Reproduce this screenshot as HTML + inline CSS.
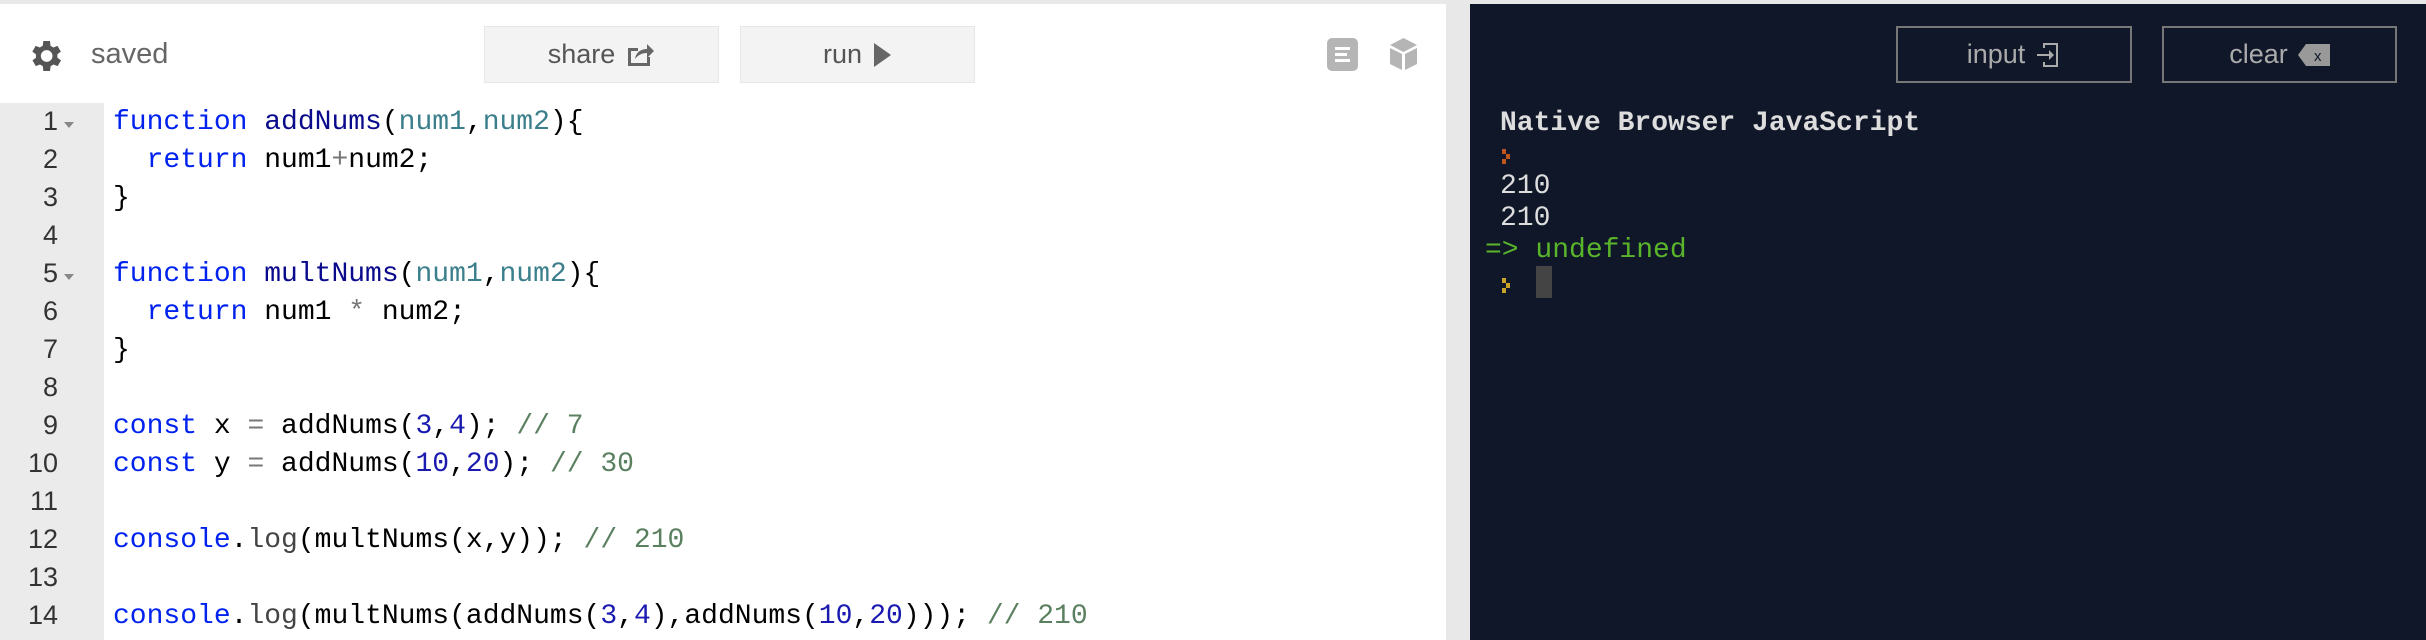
<!DOCTYPE html>
<html style="width:2426px;height:640px;overflow:hidden"><head><meta charset="utf-8"><style>
*{margin:0;padding:0;box-sizing:border-box}
body{width:2426px;height:640px;overflow:hidden;background:#e8e8e8;position:relative;font-family:"Liberation Sans",sans-serif}
#left{position:absolute;left:0;top:4px;width:1446px;height:636px;background:#fff;overflow:hidden}
#right{position:absolute;left:1470px;top:4px;width:956px;height:636px;background:#0f1729;overflow:hidden}
.btn{position:absolute;top:22px;height:57px;background:#f3f3f3;border:1px solid #e6e6e6;color:#555;font-size:27px;display:flex;align-items:center;justify-content:center;gap:10px}
#gutter{position:absolute;left:0;top:99px;width:104px;height:537px;background:#ebebeb}
.ln{position:absolute;left:0;width:58px;text-align:right;font-size:27px;color:#333;font-family:"Liberation Sans",sans-serif}
.ar{position:absolute;left:64px;width:0;height:0;border-left:5px solid transparent;border-right:5px solid transparent;border-top:6px solid #888}
.code{position:absolute;left:113px;font-family:"Liberation Mono",monospace;font-size:28px;white-space:pre;color:#000}
.k{color:#0022ee}.d{color:#0a0a8c}.p{color:#3b7f8c}.n{color:#1a1ab0}.c{color:#5b8060}.o{color:#777}.g{color:#444}
.ob{position:absolute;top:22px;height:57px;border:2px solid #777;color:#aaa;font-size:27px;display:flex;align-items:center;justify-content:center;gap:10px}
.con{position:absolute;font-family:"Liberation Mono",monospace;font-size:28px;color:#ddd;white-space:pre}
#codes{position:absolute;left:0;top:3px;width:1446px;height:637px;overflow:hidden}
</style></head><body>
<div id="left">
<svg style="position:absolute;left:25px;top:31px" width="40" height="42" viewBox="0 0 24 24"><path fill="#555" d="M19.4 13a7.5 7.5 0 000-2l2.1-1.6-2-3.5-2.5 1a7.6 7.6 0 00-1.7-1L15 3h-4l-.4 2.9a7.6 7.6 0 00-1.7 1l-2.5-1-2 3.5L6.6 11a7.5 7.5 0 000 2l-2.1 1.6 2 3.5 2.5-1a7.6 7.6 0 001.7 1L11 21h4l.4-2.9a7.6 7.6 0 001.7-1l2.5 1 2-3.5zM13 15.5a3.5 3.5 0 110-7 3.5 3.5 0 010 7z"/></svg>
<div style="position:absolute;left:91px;top:34px;font-size:29px;color:#666">saved</div>
<div class="btn" style="left:484px;width:235px">share <svg width="30" height="26" viewBox="0 0 30 26"><path d="M3 6h10v3H6v12h16v-6h3v9H3z" fill="#666"/><path d="M10 17c1-7 6-10 12-10V2l7 7-7 7v-5c-5 0-9 2-12 6z" fill="#666"/></svg></div>
<div class="btn" style="left:740px;width:235px">run <svg width="20" height="26" viewBox="0 0 20 26"><path d="M2 1l17 12L2 25z" fill="#666"/></svg></div>
<svg style="position:absolute;left:1327px;top:34px" width="31" height="33" viewBox="0 0 31 33"><rect width="31" height="33" rx="5" fill="#b5b5b5"/><rect x="8" y="9" width="15" height="3" fill="#fff"/><rect x="8" y="15" width="12" height="3" fill="#fff"/><rect x="8" y="21" width="15" height="3" fill="#fff"/></svg>
<svg style="position:absolute;left:1388px;top:32px" width="31" height="36" viewBox="0 0 31 36"><path d="M15.5 2L29 9l-13.5 7L2 9z" fill="#b5b5b5"/><path d="M2 12l12 6v16L2 28z" fill="#b5b5b5"/><path d="M29 12l-12 6v16l12-6z" fill="#b5b5b5"/></svg>
<div id="gutter"></div>
</div>
<div id="right">
<div class="ob" style="left:426px;width:236px">input <svg width="26" height="28" viewBox="0 0 26 28"><path d="M8 2h15v24H8v-5h2v3h11V4H10v3H8z" fill="#aaa"/><path d="M2 13h12V9l5 5-5 5v-4H2z" fill="#aaa"/></svg></div>
<div class="ob" style="left:692px;width:235px">clear <svg width="32" height="22" viewBox="0 0 32 22"><path d="M8 0h24v22H8L0 11z" fill="#999"/><text x="16" y="17" font-size="15" fill="#0f1729" font-family="Liberation Sans">x</text></svg></div>
<div class="con" style="left:30px;top:104px;font-weight:bold">Native Browser JavaScript</div>
<svg style="position:absolute;left:32px;top:145px" width="10" height="20" viewBox="0 0 10 20"><path d="M0 0h4v5h4v5h-4v5h-4v-5h4v-5h-4z" fill="#c0561b"/></svg>
<div class="con" style="left:30px;top:167px">210</div>
<div class="con" style="left:30px;top:199px">210</div>
<div class="con" style="left:15px;top:231px;color:#5ab52a">=> undefined</div>
<svg style="position:absolute;left:32px;top:274px" width="10" height="20" viewBox="0 0 10 20"><path d="M0 0h4v5h4v5h-4v5h-4v-5h4v-5h-4z" fill="#c9a227"/></svg>
<div style="position:absolute;left:66px;top:262px;width:16px;height:32px;background:#444"></div>
</div>
<div id="codes">
<div class="ln" style="top:103px">1</div><div class="ar" style="top:119px"></div>
<div class="ln" style="top:141px">2</div>
<div class="ln" style="top:179px">3</div>
<div class="ln" style="top:217px">4</div>
<div class="ln" style="top:255px">5</div><div class="ar" style="top:271px"></div>
<div class="ln" style="top:293px">6</div>
<div class="ln" style="top:331px">7</div>
<div class="ln" style="top:369px">8</div>
<div class="ln" style="top:407px">9</div>
<div class="ln" style="top:445px">10</div>
<div class="ln" style="top:483px">11</div>
<div class="ln" style="top:521px">12</div>
<div class="ln" style="top:559px">13</div>
<div class="ln" style="top:597px">14</div>
<div class="code" style="top:104px"><span class="k">function</span> <span class="d">addNums</span>(<span class="p">num1</span>,<span class="p">num2</span>){</div>
<div class="code" style="top:142px">  <span class="k">return</span> num1<span class="o">+</span>num2;</div>
<div class="code" style="top:180px">}</div>
<div class="code" style="top:256px"><span class="k">function</span> <span class="d">multNums</span>(<span class="p">num1</span>,<span class="p">num2</span>){</div>
<div class="code" style="top:294px">  <span class="k">return</span> num1 <span class="o">*</span> num2;</div>
<div class="code" style="top:332px">}</div>
<div class="code" style="top:408px"><span class="k">const</span> x <span class="o">=</span> addNums(<span class="n">3</span>,<span class="n">4</span>); <span class="c">// 7</span></div>
<div class="code" style="top:446px"><span class="k">const</span> y <span class="o">=</span> addNums(<span class="n">10</span>,<span class="n">20</span>); <span class="c">// 30</span></div>
<div class="code" style="top:522px"><span class="k">console</span>.<span class="g">log</span>(multNums(x,y)); <span class="c">// 210</span></div>
<div class="code" style="top:598px"><span class="k">console</span>.<span class="g">log</span>(multNums(addNums(<span class="n">3</span>,<span class="n">4</span>),addNums(<span class="n">10</span>,<span class="n">20</span>))); <span class="c">// 210</span></div>
</div>
</body></html>
